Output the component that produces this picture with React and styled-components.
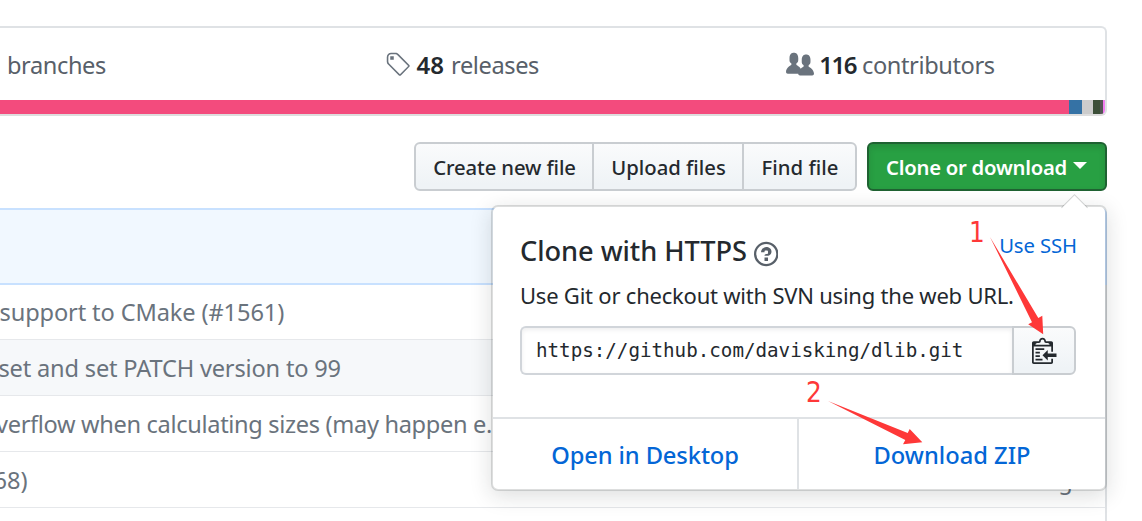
import React from 'react';
import styled, { createGlobalStyle, css } from 'styled-components';

const GlobalStyle = createGlobalStyle`
  *, *::before, *::after { box-sizing: border-box; }
  body {
    margin: 0;
    background: #fff;
    color: #24292e;
    font-family: "Noto Sans", "Open Sans", sans-serif;
  }
`;

const Page = styled.main`
  position: relative;
  width: 1142px;
  height: 521px;
  overflow: hidden;
  display: flex;
  flex-direction: column;
  padding: 26px 35px 0 0;
  white-space: nowrap;
`;

/* ---- repository summary ---- */

const Summary = styled.section`
  flex: none;
  border: 2px solid #dfe2e5;
  border-left: 0;
  border-bottom-color: #ddd;
  border-radius: 0 6px 6px 0;
  overflow: hidden;
`;

const Stats = styled.ul`
  display: grid;
  grid-template-columns: 248px 428px 429px;
  height: 72px;
  margin: 0;
  padding: 0;
  list-style: none;
`;

const Stat = styled.li`
  display: flex;
  align-items: center;
  justify-content: ${(p) => (p.$start ? 'flex-start' : 'center')};
  padding: ${(p) => (p.$start ? '1px 0 0 7px' : '1px 0 0')};
  color: #586069;
  font-size: 23.6px;
  letter-spacing: -0.4px;

  svg { fill: #6a737d; }
`;

const Count = styled.span`
  margin: 0 7px 0 7px;
  color: #24292e;
  font-size: 24px;
  font-weight: 600;
  letter-spacing: 0;
`;

const CompactCount = styled(Count)`
  margin: 0 6px 0 5px;
  letter-spacing: -1.5px;
`;

const LanguageBar = styled.div`
  display: flex;
  height: 14px;
`;

const Language = styled.span`
  flex: ${(p) => (p.$width ? `0 0 ${p.$width}px` : '1')};
  background: ${(p) => p.$color};
`;

/* ---- file actions ---- */

const Actions = styled.div`
  flex: none;
  display: flex;
  justify-content: flex-end;
  gap: 10px;
  height: 49px;
  margin-top: 26px;
`;

const ButtonGroup = styled.div`
  display: flex;
`;

const buttonFace = css`
  border: 2px solid #c9cdd1;
  background: linear-gradient(#fafbfc, #eff3f6 90%);
  color: #24292e;
`;

const Button = styled.button`
  ${buttonFace}
  display: flex;
  align-items: center;
  justify-content: center;
  width: ${(p) => p.$width}px;
  padding: 0 0 0 1px;
  font-family: inherit;
  font-size: 20.3px;
  font-weight: 500;
  letter-spacing: ${(p) => p.$tracking || 0}px;

  & + & { margin-left: -2px; }
  &:first-child { border-radius: 6px 0 0 6px; }
  &:last-child { border-radius: 0 6px 6px 0; }
`;

const CloneButton = styled.button`
  display: flex;
  align-items: center;
  justify-content: center;
  gap: 6px;
  width: 240px;
  padding: 0 1px 0 0;
  border: 2px solid #1f6232;
  border-radius: 6px;
  background: #28a043;
  box-shadow: inset 0 3px 6px rgba(27, 31, 35, 0.15);
  color: #fff;
  font-family: inherit;
  font-size: 20.3px;
  font-weight: 600;
  letter-spacing: -0.25px;

  &::after {
    content: "";
    margin-top: -3px;
    border: 7px solid transparent;
    border-top-color: #fff;
    border-bottom: 0;
  }
`;

/* ---- file list ---- */

const FileList = styled.section`
  flex: none;
  margin-top: 17px;
`;

const LatestCommit = styled.div`
  height: 77px;
  border: 2px solid #c8e1ff;
  border-left: 0;
  border-radius: 0 6px 0 0;
  background: #f1f8ff;
`;

const FileTable = styled.div`
  height: 280px;
  border-right: 2px solid #dfe2e5;
`;

const FileRow = styled.div`
  display: flex;
  align-items: center;
  justify-content: space-between;
  height: 56px;
  padding-right: 18px;
  border-top: 1px solid #e6e8eb;
  background: ${(p) => (p.$shaded ? '#f6f8fa' : '#fff')};
  color: #6a737d;
  font-size: 23.6px;

  &:first-child {
    height: 54px;
    border-top: 0;
  }
`;

const Message = styled.span`
  margin-left: ${(p) => p.$shift || 0}px;
  letter-spacing: ${(p) => p.$tracking || 0}px;
`;

/* ---- clone dropdown ---- */

const Dropdown = styled.aside`
  position: absolute;
  top: 205px;
  left: 491px;
  width: 616px;
  height: 286px;
  display: flex;
  flex-direction: column;
  border: 2px solid rgba(27, 31, 35, 0.15);
  border-radius: 7px;
  background: #fff;
  background-clip: padding-box;
  box-shadow: 0 5px 21px rgba(27, 31, 35, 0.15);

  &::before {
    content: "";
    position: absolute;
    top: -9.5px;
    right: 21px;
    width: 19px;
    height: 19px;
    border: solid rgba(27, 31, 35, 0.18);
    border-width: 1px 0 0 1px;
    background: #fff;
    background-clip: padding-box;
    transform: rotate(45deg);
  }
`;

const DropdownBody = styled.div`
  position: relative;
  flex: 1;
  display: flex;
  flex-direction: column;
  padding: 22px 29px 0 27px;
`;

const TitleRow = styled.div`
  display: flex;
  align-items: center;
  justify-content: space-between;
  height: 42px;
`;

const Title = styled.h4`
  display: flex;
  align-items: center;
  gap: 7px;
  margin: 0;
  font-size: 27.2px;
  font-weight: 500;
  letter-spacing: -0.05px;

  svg { margin-top: 7px; fill: #586069; }
`;

const SwitchLink = styled.a`
  margin: 0 -1px 10px 0;
  color: #0366d6;
  font-size: 20.3px;
  letter-spacing: -0.1px;
`;

const Description = styled.p`
  height: 31px;
  margin: 9px 0 15px;
  font-size: 22px;
  line-height: 31px;
  letter-spacing: -0.22px;
`;

const UrlField = styled.div`
  display: flex;
  height: 49px;
`;

const UrlInput = styled.input`
  flex: 1;
  min-width: 0;
  padding: 0 14px;
  border: 2px solid #d1d5da;
  border-right: 0;
  border-radius: 6px 0 0 6px;
  outline: 0;
  background: #fff;
  box-shadow: inset 0 2px 4px rgba(27, 31, 35, 0.075);
  color: #24292e;
  font-family: "DejaVu Sans Mono", monospace;
  font-size: 19.2px;
`;

const CopyButton = styled.button`
  ${buttonFace}
  display: flex;
  align-items: center;
  justify-content: center;
  width: 64px;
  padding: 0;
  border-radius: 0 6px 6px 0;

  svg { margin: -2px 0 0 1px; fill: #24292e; }
`;

const DropdownFooter = styled.div`
  display: grid;
  grid-template-columns: 306px 1fr;
  height: 72px;
  border-top: 2px solid #dfe2e5;
`;

const FooterLink = styled.a`
  display: flex;
  align-items: center;
  justify-content: center;
  padding-top: 1px;
  color: #0366d6;
  font-size: 23.7px;
  font-weight: 500;
  letter-spacing: ${(p) => p.$tracking || 0}px;

  &:first-child { border-right: 2px solid #dfe2e5; }
`;

/* ---- red pointers over the page ---- */

const Pointers = styled.svg`
  position: absolute;
  top: 0;
  left: 0;
  fill: #fe3838;
  pointer-events: none;
`;

const StepNumber = styled.span`
  position: absolute;
  top: ${(p) => p.$top}px;
  left: ${(p) => p.$left}px;
  color: #fe3838;
  font-family: "DejaVu Sans Condensed", "DejaVu Sans", sans-serif;
  font-size: 27.5px;
  line-height: 32px;
`;

const TagIcon = () => (
  <svg width="24.5" height="28" viewBox="0 0 14 16" aria-hidden="true">
    <path d="M7.73 1.73C7.26 1.26 6.62 1 5.96 1H3.5C2.13 1 1 2.13 1 3.5v2.47c0 .66.27 1.3.73 1.77l6.06 6.06c.39.39 1.02.39 1.41 0l4.59-4.59a.996.996 0 0 0 0-1.41L7.73 1.73zM2.38 7.09c-.31-.3-.47-.7-.47-1.13V3.5c0-.88.72-1.59 1.59-1.59h2.47c.42 0 .83.16 1.13.47l6.14 6.13-4.73 4.73-6.13-6.15zM3.01 3h2v2H3V3h.01z" />
  </svg>
);

const PeopleIcon = () => (
  <svg width="28" height="28" viewBox="0 0 16 16" aria-hidden="true">
    <path d="M16 12.999c0 .439-.45 1-1 1H7.995c-.539 0-.994-.447-.995-.999H1c-.54 0-1-.561-1-1 0-2.634 3-4 3-4s.229-.409 0-1c-.841-.621-1.058-.59-1-3 .058-2.419 1.367-3 2.5-3s2.442.58 2.5 3c.058 2.41-.159 2.379-1 3-.229.59 0 1 0 1s1.549.711 2.42 2.088C9.196 9.369 10 8.999 10 8.999s.229-.409 0-1c-.841-.62-1.058-.59-1-3 .058-2.419 1.367-3 2.5-3s2.437.581 2.495 3c.059 2.41-.158 2.38-1 3-.229.59 0 1 0 1s3.005 1.366 3.005 4" />
  </svg>
);

const QuestionIcon = () => (
  <svg width="24.5" height="28" viewBox="0 0 14 16" aria-hidden="true">
    <path fillRule="evenodd" d="M6 10h2v2H6v-2zm4-3.5C10 8.64 8 9 8 9H6c0-.55.45-1 1-1h.5c.28 0 .5-.22.5-.5v-1c0-.28-.22-.5-.5-.5h-1c-.28 0-.5.22-.5.5V7H4c0-1.5 1.5-3 3-3s3 1 3 2.5zM7 2.3c3.14 0 5.7 2.56 5.7 5.7s-2.56 5.7-5.7 5.7A5.71 5.71 0 0 1 1.3 8c0-3.14 2.56-5.7 5.7-5.7zM7 1C3.14 1 0 4.14 0 8s3.14 7 7 7 7-3.14 7-7-3.14-7-7-7z" />
  </svg>
);

const ClipboardIcon = () => (
  <svg width="24.5" height="28" viewBox="0 0 14 16" aria-hidden="true">
    <path fillRule="evenodd" d="M2 13h4v1H2v-1zm5-6H2v1h5V7zm2 3V8l-3 3 3 3v-2h5v-2H9zM4.5 9H2v1h2.5V9zM2 12h2.5v-1H2v1zm9 1h1v2c-.02.28-.11.52-.3.7-.19.18-.42.28-.7.3H1c-.55 0-1-.45-1-1V4c0-.55.45-1 1-1h3c0-1.11.89-2 2-2 1.11 0 2 .89 2 2h3c.55 0 1 .45 1 1v5h-1V6H1v9h10v-2zM2 5h8c0-.55-.45-1-1-1H8c-.55 0-1-.45-1-1s-.45-1-1-1-1 .45-1 1-.45 1-1 1H3c-.55 0-1 .45-1 1z" />
  </svg>
);

export default function App() {
  return (
    <Page>
      <GlobalStyle />

      <Summary>
        <Stats>
          <Stat $start>branches</Stat>
          <Stat>
            <TagIcon />
            <Count>48</Count>
            releases
          </Stat>
          <Stat>
            <PeopleIcon />
            <CompactCount>116</CompactCount>
            contributors
          </Stat>
        </Stats>
        <LanguageBar>
          <Language $color="#f34b7d" />
          <Language $color="#3572a5" $width={13} />
          <Language $color="#ccc" $width={11} />
          <Language $color="#3c4f38" $width={7} />
          <Language $color="#555" $width={3} />
          <Language $color="#f27df0" $width={2} />
        </LanguageBar>
      </Summary>

      <Actions>
        <ButtonGroup>
          <Button $width={180} $tracking={-0.12}>Create new file</Button>
          <Button $width={152}>Upload files</Button>
          <Button $width={115} $tracking={0.05}>Find file</Button>
        </ButtonGroup>
        <CloneButton>Clone or download</CloneButton>
      </Actions>

      <FileList>
        <LatestCommit />
        <FileTable>
          <FileRow><Message $shift={-0.5} $tracking={-0.12}>support to CMake (#1561)</Message></FileRow>
          <FileRow $shaded><Message $shift={-1.5} $tracking={-0.18}>set and set PATCH version to 99</Message></FileRow>
          <FileRow><Message $shift={-4} $tracking={-0.33}>verflow when calculating sizes (may happen e...</Message></FileRow>
          <FileRow><Message $shift={-6.5}>68)</Message><span>2 months ago</span></FileRow>
          <FileRow />
        </FileTable>
      </FileList>

      <Dropdown>
        <DropdownBody>
          <TitleRow>
            <Title>Clone with HTTPS <QuestionIcon /></Title>
            <SwitchLink>Use SSH</SwitchLink>
          </TitleRow>
          <Description>Use Git or checkout with SVN using the web URL.</Description>
          <UrlField>
            <UrlInput readOnly value="https://github.com/davisking/dlib.git" />
            <CopyButton aria-label="Copy URL"><ClipboardIcon /></CopyButton>
          </UrlField>
        </DropdownBody>
        <DropdownFooter>
          <FooterLink $tracking={-0.1}>Open in Desktop</FooterLink>
          <FooterLink>Download ZIP</FooterLink>
        </DropdownFooter>
      </Dropdown>

      <Pointers width="1142" height="521" viewBox="0 0 1142 521" aria-hidden="true">
        <path d="M990 237 L1038.3 318 L1042.3 315.8 L1043.2 334.2 L1028.2 324.2 L1032 322.2 Z" />
        <path d="M828 401 L907.7 433 L909.7 429 L922.3 442.3 L903 444.2 L905.3 440 Z" />
      </Pointers>
      <StepNumber $top={216} $left={969}>1</StepNumber>
      <StepNumber $top={376} $left={806}>2</StepNumber>
    </Page>
  );
}
